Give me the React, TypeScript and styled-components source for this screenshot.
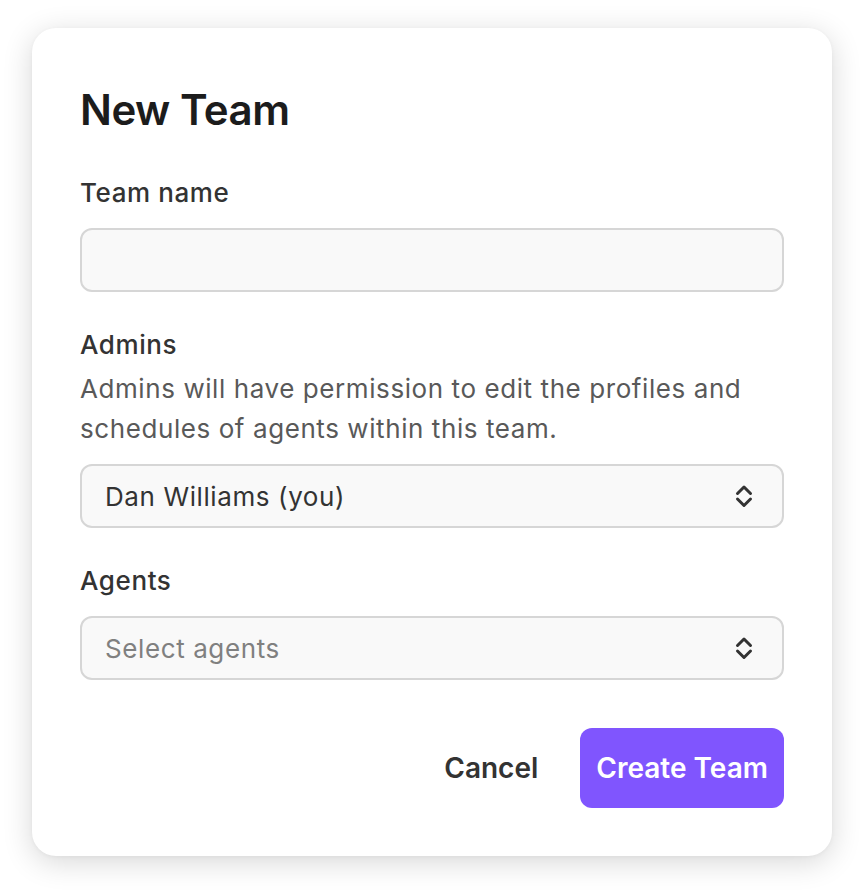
import React from "react";
import styled, { createGlobalStyle } from "styled-components";

const GlobalStyle = createGlobalStyle`
  body {
    margin: 0;
    background: #ffffff;
    font-family: "Inter", "Noto Sans", sans-serif;
    -webkit-font-smoothing: antialiased;
  }
`;

const Page = styled.div`
  padding: 28px 32px 36px 32px;
`;

const Card = styled.div`
  width: 800px;
  box-sizing: border-box;
  padding: 56px 48px 48px 48px;
  background: #ffffff;
  border-radius: 24px;
  box-shadow: 0 6px 30px rgba(0, 0, 0, 0.16), 0 1px 4px rgba(0, 0, 0, 0.04);
`;

const Title = styled.h1`
  margin: 0;
  font-size: 42px;
  line-height: 52px;
  font-weight: 600;
  color: #1c1c1c;
  letter-spacing: -0.5px;
`;

const Field = styled.div<{ $first?: boolean }>`
  margin-top: ${(p) => (p.$first ? "39px" : "35px")};
`;

const Label = styled.div<{ $tight?: boolean }>`
  font-size: 26px;
  line-height: 36px;
  font-weight: 500;
  letter-spacing: 0.6px;
  color: #333333;
  margin-bottom: ${(p) => (p.$tight ? "6px" : "17px")};
`;

const Hint = styled.p`
  margin: 0 0 15px 0;
  font-size: 26px;
  line-height: 40px;
  letter-spacing: 0.58px;
  color: #595959;
`;

const TextInput = styled.input`
  display: block;
  width: 100%;
  height: 64px;
  box-sizing: border-box;
  padding: 0 24px;
  border: 2px solid #d6d6d6;
  border-radius: 12px;
  background: #f9f9f9;
  font-family: inherit;
  font-size: 26px;
  color: #333333;
  outline: none;
`;

const SelectBox = styled.div`
  display: flex;
  align-items: center;
  justify-content: space-between;
  height: 64px;
  box-sizing: border-box;
  padding: 0 29px 0 23px;
  border: 2px solid #d6d6d6;
  border-radius: 12px;
  background: #f9f9f9;
`;

const SelectValue = styled.span<{ $placeholder?: boolean }>`
  font-size: 26px;
  letter-spacing: 0.6px;
  color: ${(p) => (p.$placeholder ? "#808080" : "#333333")};
`;

const Footer = styled.div`
  display: flex;
  justify-content: flex-end;
  align-items: center;
  gap: 26px;
  margin-top: 48px;
`;

const Button = styled.button<{ $primary?: boolean }>`
  height: 80px;
  padding: 0 16px;
  border: none;
  border-radius: 12px;
  background: ${(p) => (p.$primary ? "#8055fe" : "transparent")};
  color: ${(p) => (p.$primary ? "#ffffff" : "#333333")};
  font-family: inherit;
  font-size: 28px;
  font-weight: 600;
  cursor: pointer;
`;

function UpDown() {
  return (
    <svg width="18" height="24" viewBox="0 0 18 24" fill="none">
      <polyline
        points="2.5,9.5 9,3 15.5,9.5"
        stroke="#333333"
        strokeWidth="3"
        strokeLinecap="round"
        strokeLinejoin="round"
      />
      <polyline
        points="2.5,15 9,21.5 15.5,15"
        stroke="#333333"
        strokeWidth="3"
        strokeLinecap="round"
        strokeLinejoin="round"
      />
    </svg>
  );
}

export default function App() {
  return (
    <Page>
      <GlobalStyle />
      <Card>
        <Title>New Team</Title>

        <Field $first>
          <Label>Team name</Label>
          <TextInput type="text" />
        </Field>

        <Field>
          <Label $tight>Admins</Label>
          <Hint>
            Admins will have permission to edit the profiles and schedules of
            agents within this team.
          </Hint>
          <SelectBox>
            <SelectValue>Dan Williams (you)</SelectValue>
            <UpDown />
          </SelectBox>
        </Field>

        <Field>
          <Label>Agents</Label>
          <SelectBox>
            <SelectValue $placeholder>Select agents</SelectValue>
            <UpDown />
          </SelectBox>
        </Field>

        <Footer>
          <Button>Cancel</Button>
          <Button $primary>Create Team</Button>
        </Footer>
      </Card>
    </Page>
  );
}
